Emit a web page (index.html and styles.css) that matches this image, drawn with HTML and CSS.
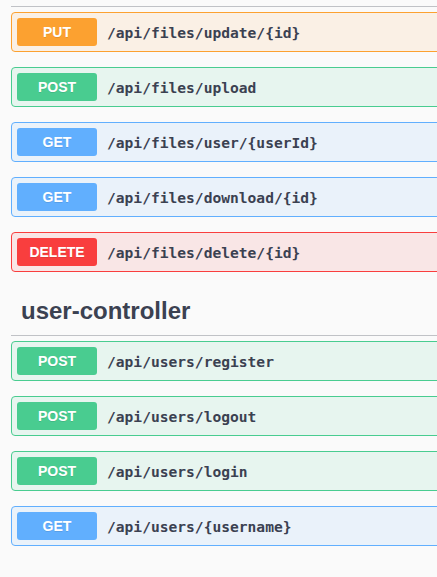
FILE: index.html
```html
<!DOCTYPE html>
<html>
<head>
<meta charset="utf-8">
<link rel="stylesheet" href="styles.css">
</head>
<body>
<div class="wrapper">
  <section class="tag-section">
    <div class="tag-line"></div>
    <div class="opblock put"><span class="method">PUT</span><span class="path">/api/files/update/{id}</span></div>
    <div class="opblock post"><span class="method">POST</span><span class="path">/api/files/upload</span></div>
    <div class="opblock get"><span class="method">GET</span><span class="path">/api/files/user/{userId}</span></div>
    <div class="opblock get"><span class="method">GET</span><span class="path">/api/files/download/{id}</span></div>
    <div class="opblock delete"><span class="method">DELETE</span><span class="path">/api/files/delete/{id}</span></div>
  </section>
  <section class="tag-section">
    <h3 class="tag">user-controller</h3>
    <div class="opblock post"><span class="method">POST</span><span class="path">/api/users/register</span></div>
    <div class="opblock post"><span class="method">POST</span><span class="path">/api/users/logout</span></div>
    <div class="opblock post"><span class="method">POST</span><span class="path">/api/users/login</span></div>
    <div class="opblock get"><span class="method">GET</span><span class="path">/api/users/{username}</span></div>
  </section>
</div>
</body>
</html>
```
FILE: styles.css
```css
html, body {
  margin: 0;
  padding: 0;
  background: #fafafa;
  overflow: hidden;
}
body {
  font-family: "Liberation Sans", Arial, sans-serif;
  color: #3b4151;
}
.wrapper {
  padding: 6px 0 0 11px;
  width: 480px;
}
.tag-line {
  height: 1px;
  background: rgba(59, 65, 81, 0.3);
  margin-bottom: 5px;
}
.tag {
  margin: 0 0 5px;
  padding: 10px 20px 10px 10px;
  font-size: 24px;
  font-weight: 700;
  line-height: 28px;
  border-bottom: 1px solid rgba(59, 65, 81, 0.3);
  color: #3b4151;
}
.opblock {
  display: flex;
  align-items: center;
  padding: 5px;
  margin: 0 0 15px;
  border: 1px solid;
  border-radius: 4px;
}
.method {
  min-width: 80px;
  padding: 6px 0;
  font-size: 14px;
  line-height: 16px;
  font-weight: 700;
  text-align: center;
  color: #fff;
  border-radius: 3px;
  text-shadow: 0 1px 0 rgba(0, 0, 0, 0.1);
}
.path {
  padding: 0 10px;
  font-family: "DejaVu Sans Mono", monospace;
  font-size: 14.6px;
  font-weight: 700;
  color: #3b4151;
}
.put { border-color: #fca130; background: rgba(252, 161, 48, 0.1); }
.put .method { background: #fca130; }
.post { border-color: #49cc90; background: rgba(73, 204, 144, 0.1); }
.post .method { background: #49cc90; }
.get { border-color: #61affe; background: rgba(97, 175, 254, 0.1); }
.get .method { background: #61affe; }
.delete { border-color: #f93e3e; background: rgba(249, 62, 62, 0.1); }
.delete .method { background: #f93e3e; }
```
